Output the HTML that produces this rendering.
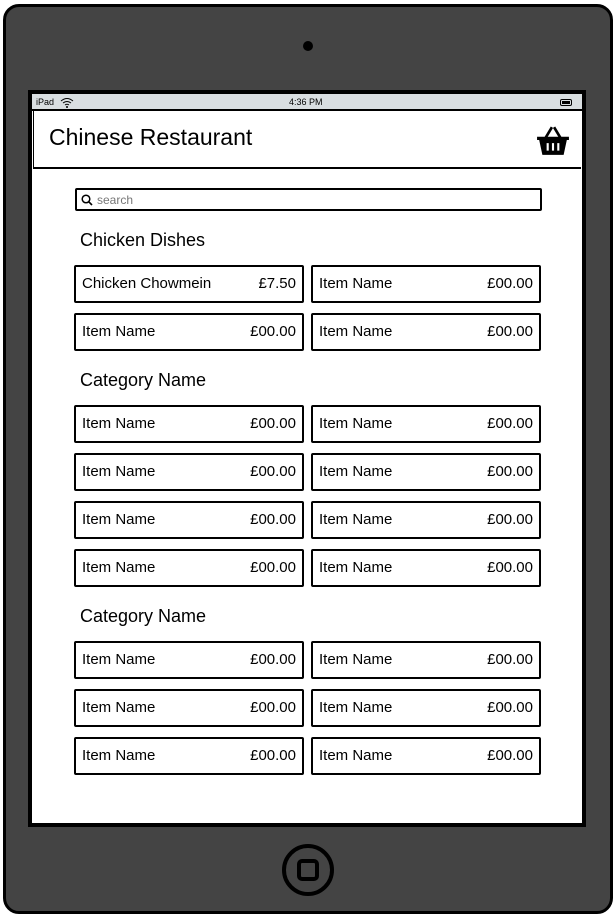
<!DOCTYPE html>
<html><head><style>
*{margin:0;padding:0;box-sizing:border-box}
body{width:616px;height:916px;background:#fff;position:relative;overflow:hidden;font-family:"Liberation Sans",sans-serif;color:#000}
.dev{position:absolute;left:3px;top:4px;width:610px;height:910px;background:#444;border:3px solid #000;border-radius:16px}
.cam{position:absolute;left:303px;top:41px;width:10px;height:10px;border-radius:50%;background:#000}
.scr{position:absolute;left:28px;top:90px;width:558px;height:737px;background:#fff;border:4px solid #000}
.sb{position:absolute;left:0;top:0;width:550px;height:17px;background:#d9dee1;font-size:9px;border-bottom:2px solid #000}
.hdr{position:absolute;left:1px;top:17px;width:548px;height:58px;border-bottom:2px solid #000;border-left:1px solid #000}
.hdr h1{position:absolute;left:15px;top:13px;font-size:23px;font-weight:normal}
.search{position:absolute;left:43px;top:94px;width:467px;height:23px;border:2px solid #000;border-radius:2px;font-size:12px;color:#777;padding:3px 0 0 20px}
.cat{position:absolute;left:48px;font-size:18px}
.it{position:absolute;width:230px;height:38px;border:2px solid #000;border-radius:2px;font-size:15px;padding:8px 6px 0 6px;display:flex;justify-content:space-between}
.home{position:absolute;left:282px;top:844px;width:52px;height:52px;border:4px solid #000;border-radius:50%}
.home div{position:absolute;left:11px;top:11px;width:22px;height:22px;border:4px solid #000;border-radius:5px}
</style></head><body>
<div class="dev"></div>
<div class="cam"></div>
<div class="scr">
 <div class="sb"><span style="position:absolute;left:4px;top:3px">iPad</span>
  <svg style="position:absolute;left:28px;top:3px" width="14" height="11" viewBox="0 0 14 11"><path d="M1 4Q7-1 13 4M3 6Q7 3 11 6M5 8Q7 6.5 9 8" fill="none" stroke="#000" stroke-width="1"/><circle cx="7" cy="10" r="1"/></svg>
  <span style="position:absolute;left:257px;top:3px">4:36 PM</span>
  <div style="position:absolute;left:528px;top:5px;width:12px;height:7px;border:1px solid #000;border-radius:2px"><div style="margin:1px;width:8px;height:3px;background:#000"></div></div>
 </div>
 <div class="hdr"><h1>Chinese Restaurant</h1>
  <svg style="position:absolute;left:502px;top:13px" width="34" height="34" viewBox="0 0 32 32"><path d="M9 13L15 3M23 13L17 3" stroke="#000" stroke-width="2.5" fill="none"/><path d="M1 12H31V15H29L26 29H6L3 15H1Z" fill="#000"/><path d="M11 18V25M16 18V25M21 18V25" stroke="#fff" stroke-width="2"/></svg>
 </div>
 <div class="search"><svg style="position:absolute;left:4px;top:4px" width="12" height="12" viewBox="0 0 12 12"><circle cx="5" cy="5" r="3.8" fill="none" stroke="#000" stroke-width="1.5"/><path d="M7.8 7.8L11 11" stroke="#000" stroke-width="1.6"/></svg>search</div>
</div>
<div class="cat" style="left:80px;top:230px">Chicken Dishes</div>
<div class="cat" style="left:80px;top:370px">Category Name</div>
<div class="cat" style="left:80px;top:606px">Category Name</div>
<div class="it" style="left:74px;top:265px"><span>Chicken Chowmein</span><span>£7.50</span></div>
<div class="it" style="left:311px;top:265px"><span>Item Name</span><span>£00.00</span></div>
<div class="it" style="left:74px;top:313px"><span>Item Name</span><span>£00.00</span></div>
<div class="it" style="left:311px;top:313px"><span>Item Name</span><span>£00.00</span></div>
<div class="it" style="left:74px;top:405px"><span>Item Name</span><span>£00.00</span></div>
<div class="it" style="left:311px;top:405px"><span>Item Name</span><span>£00.00</span></div>
<div class="it" style="left:74px;top:453px"><span>Item Name</span><span>£00.00</span></div>
<div class="it" style="left:311px;top:453px"><span>Item Name</span><span>£00.00</span></div>
<div class="it" style="left:74px;top:501px"><span>Item Name</span><span>£00.00</span></div>
<div class="it" style="left:311px;top:501px"><span>Item Name</span><span>£00.00</span></div>
<div class="it" style="left:74px;top:549px"><span>Item Name</span><span>£00.00</span></div>
<div class="it" style="left:311px;top:549px"><span>Item Name</span><span>£00.00</span></div>
<div class="it" style="left:74px;top:641px"><span>Item Name</span><span>£00.00</span></div>
<div class="it" style="left:311px;top:641px"><span>Item Name</span><span>£00.00</span></div>
<div class="it" style="left:74px;top:689px"><span>Item Name</span><span>£00.00</span></div>
<div class="it" style="left:311px;top:689px"><span>Item Name</span><span>£00.00</span></div>
<div class="it" style="left:74px;top:737px"><span>Item Name</span><span>£00.00</span></div>
<div class="it" style="left:311px;top:737px"><span>Item Name</span><span>£00.00</span></div>
<div class="home"><div></div></div>
</body></html>
